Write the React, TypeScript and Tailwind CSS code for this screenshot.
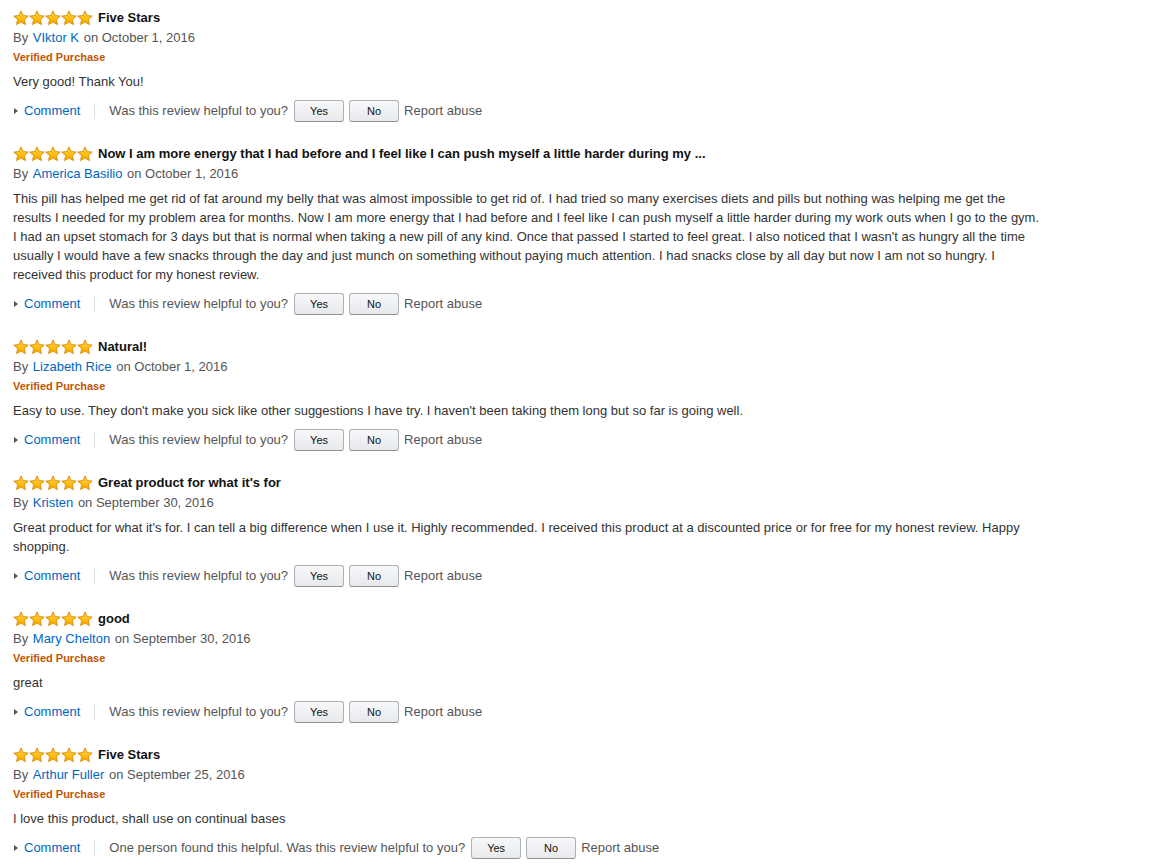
import React from 'react';

interface Review {
  id: number;
  title: string;
  author: string;
  date: string;
  verified: boolean;
  body: string;
  helpfulNote?: string;
}

const reviews: Review[] = [
  {
    id: 1,
    title: 'Five Stars',
    author: 'VIktor K',
    date: 'October 1, 2016',
    verified: true,
    body: 'Very good! Thank You!',
  },
  {
    id: 2,
    title: 'Now I am more energy that I had before and I feel like I can push myself a little harder during my ...',
    author: 'America Basilio',
    date: 'October 1, 2016',
    verified: false,
    body:
      "This pill has helped me get rid of fat around my belly that was almost impossible to get rid of. I had tried so many exercises diets and pills but nothing was helping me get the results I needed for my problem area for months. Now I am more energy that I had before and I feel like I can push myself a little harder during my work outs when I go to the gym. I had an upset stomach for 3 days but that is normal when taking a new pill of any kind. Once that passed I started to feel great. I also noticed that I wasn't as hungry all the time usually I would have a few snacks through the day and just munch on something without paying much attention. I had snacks close by all day but now I am not so hungry. I received this product for my honest review.",
  },
  {
    id: 3,
    title: 'Natural!',
    author: 'Lizabeth Rice',
    date: 'October 1, 2016',
    verified: true,
    body: "Easy to use. They don't make you sick like other suggestions I have try. I haven't been taking them long but so far is going well.",
  },
  {
    id: 4,
    title: "Great product for what it's for",
    author: 'Kristen',
    date: 'September 30, 2016',
    verified: false,
    body:
      "Great product for what it's for. I can tell a big difference when I use it. Highly recommended. I received this product at a discounted price or for free for my honest review. Happy shopping.",
  },
  {
    id: 5,
    title: 'good',
    author: 'Mary Chelton',
    date: 'September 30, 2016',
    verified: true,
    body: 'great',
  },
  {
    id: 6,
    title: 'Five Stars',
    author: 'Arthur Fuller',
    date: 'September 25, 2016',
    verified: true,
    body: 'I love this product, shall use on continual bases',
    helpfulNote: 'One person found this helpful.',
  },
];

// single star drawn with a yellow→orange fill and a darker rim
const Star = ({ id }: { id: string }) => (
  <svg width="16" height="16" viewBox="0 0 16 16" aria-hidden="true">
    <defs>
      <linearGradient id={id} x1="0" y1="0" x2="0" y2="1">
        <stop offset="0" stopColor="#ffd95a" />
        <stop offset="0.55" stopColor="#ffbe12" />
        <stop offset="1" stopColor="#f7a200" />
      </linearGradient>
    </defs>
    <path
      d="M8 0.9 L10.1 5.6 L15.2 6.1 L11.35 9.5 L12.45 14.6 L8 12 L3.55 14.6 L4.65 9.5 L0.8 6.1 L5.9 5.6 Z"
      fill={`url(#${id})`}
      stroke="#d88a00"
      strokeWidth="0.9"
      strokeLinejoin="round"
    />
  </svg>
);

const Stars = ({ rid }: { rid: number }) => (
  <span className="flex items-center shrink-0">
    {[0, 1, 2, 3, 4].map((i) => (
      <Star key={i} id={`star-${rid}-${i}`} />
    ))}
  </span>
);

const VoteButton = ({ label }: { label: string }) => (
  <button
    type="button"
    className="h-[22px] w-[50px] rounded-[3px] border border-[#adb1b8] border-b-[#8d9096] bg-gradient-to-b from-[#f7f8fa] to-[#e7e9ec] text-[11px] text-[#111] leading-none"
  >
    {label}
  </button>
);

const ReviewItem = ({ review }: { review: Review }) => (
  <div className="pb-[22px]">
    <div className="flex items-center h-5 gap-[5px]">
      <Stars rid={review.id} />
      <span className="font-bold text-[13px] text-[#111] whitespace-nowrap">{review.title}</span>
    </div>
    <div className="h-5 leading-5 text-[13px] text-[#555]">
      By <a className="text-[#0066c0] ml-px mr-px">{review.author}</a> on {review.date}
    </div>
    {review.verified && (
      <div className="h-[19px] leading-[19px] text-[11px] font-bold text-[#c45500]">Verified Purchase</div>
    )}
    <p className="mt-[5px] text-[13px] leading-[19px] text-[#333]">{review.body}</p>
    <div className="mt-[9px] flex items-center h-[22px] text-[13px]">
      <span className="flex items-center">
        <span className="ml-px w-0 h-0 border-y-[3.5px] border-y-transparent border-l-[4px] border-l-[#555]" />
        <a className="ml-[6px] text-[#0066c0]">Comment</a>
      </span>
      <span className="mx-[14px] w-px h-4 bg-[#ddd]" />
      <span className="text-[#555] mr-[6px]">
        {review.helpfulNote ? `${review.helpfulNote} ` : ''}Was this review helpful to you?
      </span>
      <span className="flex items-center gap-[5px]">
        <VoteButton label="Yes" />
        <VoteButton label="No" />
      </span>
      <a className="ml-[5px] text-[#555]">Report abuse</a>
    </div>
  </div>
);

export default function App() {
  return (
    <div className="min-h-screen bg-white font-['Liberation_Sans',Arial,sans-serif] antialiased">
      <div className="pl-[13px] pt-[8px] w-[1041px]">
        {reviews.map((r) => (
          <ReviewItem key={r.id} review={r} />
        ))}
      </div>
    </div>
  );
}
